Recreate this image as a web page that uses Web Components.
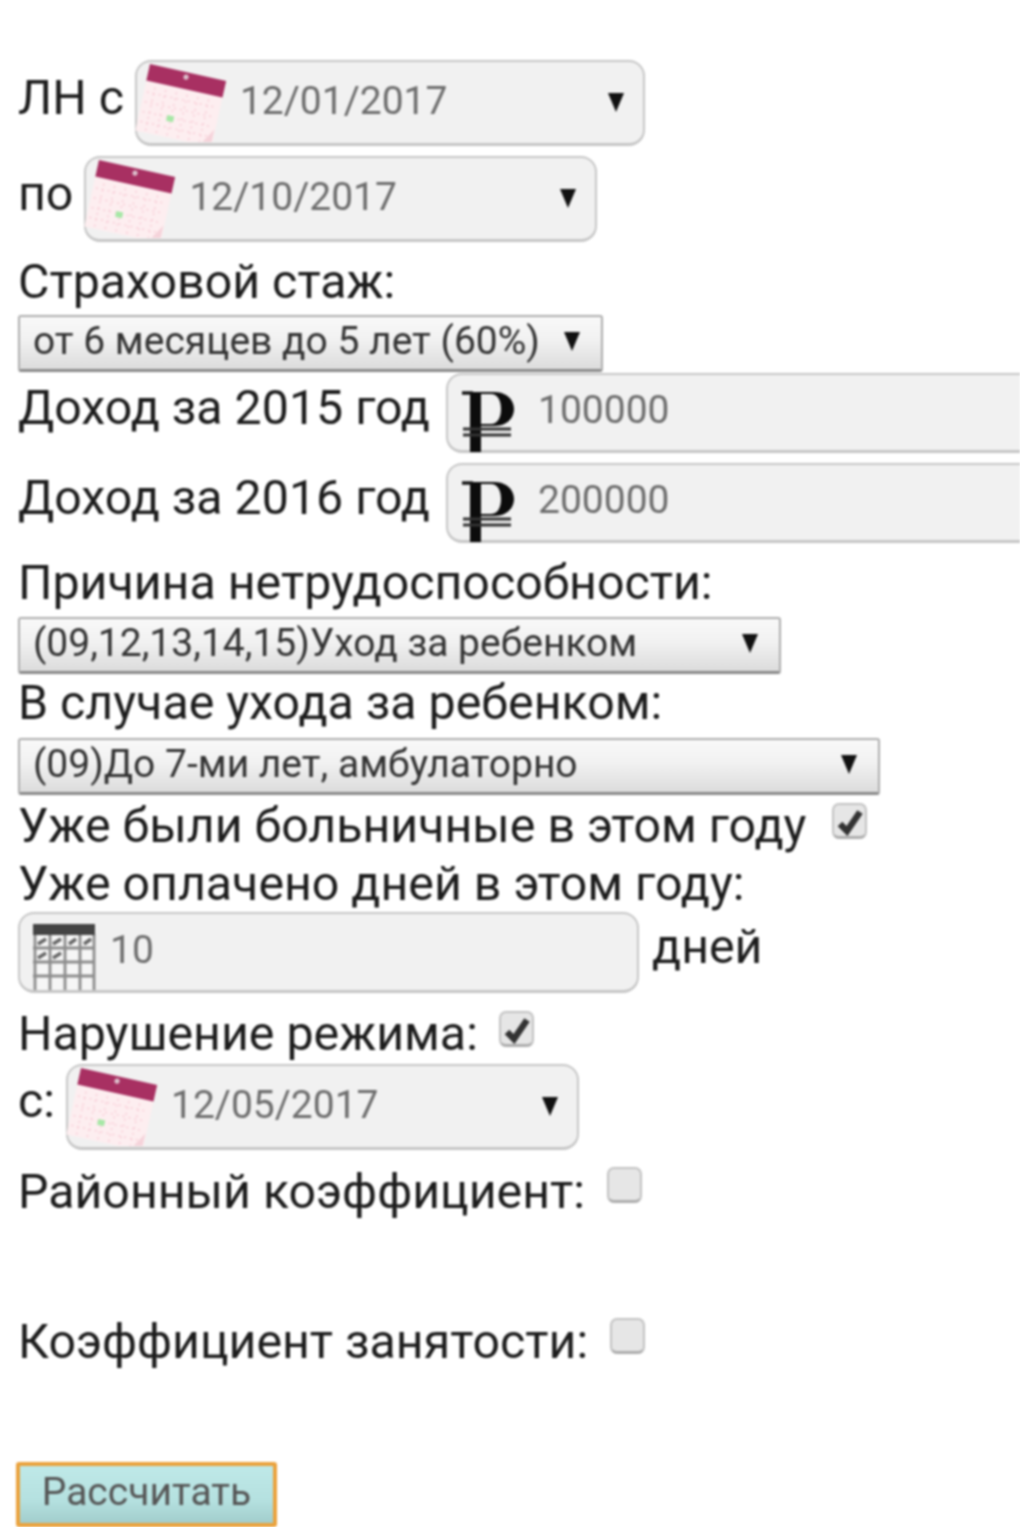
<!DOCTYPE html>
<html lang="ru">
<head>
<meta charset="utf-8">
<title>Калькулятор больничного</title>
<style>
html, body { margin: 0; padding: 0; background: #fff; overflow: hidden; }
body { font-family: Roboto, "Liberation Sans", sans-serif; color: #222; }
</style>
</head>
<body>
<calc-form>
  <form-row style="margin-top:60px">
    <form-text style="margin-bottom:7px">ЛН с</form-text>
    <date-field style="margin-left:11px;width:510px">12/01/2017</date-field>
  </form-row>
  <form-row style="margin-top:10px">
    <form-text style="margin-bottom:7px">по</form-text>
    <date-field style="margin-left:11px;width:513px">12/10/2017</date-field>
  </form-row>
  <form-row style="margin-top:18px;height:48px"><form-text>Страховой стаж:</form-text></form-row>
  <drop-select style="margin-top:7px;width:585px">от 6 месяцев до 5 лет (60%)</drop-select>
  <form-row style="margin-top:1px">
    <form-text style="margin-bottom:6px">Доход за 2015 год</form-text>
    <money-field style="margin-left:16px">100000</money-field>
  </form-row>
  <form-row style="margin-top:10px">
    <form-text style="margin-bottom:6px">Доход за 2016 год</form-text>
    <money-field style="margin-left:16px">200000</money-field>
  </form-row>
  <form-row style="margin-top:18px;height:48px"><form-text>Причина нетрудоспособности:</form-text></form-row>
  <drop-select style="margin-top:8px;width:763px">(09,12,13,14,15)Уход за ребенком</drop-select>
  <form-row style="margin-top:7px;height:48px"><form-text>В случае ухода за ребенком:</form-text></form-row>
  <drop-select style="margin-top:9px;width:862px">(09)До 7-ми лет, амбулаторно</drop-select>
  <form-row style="margin-top:9px;height:48px">
    <form-text>Уже были больничные в этом году</form-text>
    <check-box checked style="margin-left:26px;margin-bottom:14px"></check-box>
  </form-row>
  <form-row style="margin-top:10px;height:48px"><form-text>Уже оплачено дней в этом году:</form-text></form-row>
  <form-row style="margin-top:2px">
    <days-field>10</days-field>
    <form-text style="margin-left:13px;margin-bottom:8px">дней</form-text>
  </form-row>
  <form-row style="margin-top:19px;height:48px">
    <form-text>Нарушение режима:</form-text>
    <check-box checked style="margin-left:21px;margin-bottom:14px"></check-box>
  </form-row>
  <form-row style="margin-top:4px">
    <form-text style="margin-bottom:9px">с:</form-text>
    <date-field style="margin-left:11px;width:513px">12/05/2017</date-field>
  </form-row>
  <form-row style="margin-top:20px;height:48px">
    <form-text>Районный коэффициент:</form-text>
    <check-box style="margin-left:22px;margin-bottom:18px"></check-box>
  </form-row>
  <form-row style="margin-top:102px;height:48px">
    <form-text>Коэффициент занятости:</form-text>
    <check-box style="margin-left:22px;margin-bottom:16px"></check-box>
  </form-row>
  <calc-button style="margin-top:94px">Рассчитать</calc-button>
</calc-form>

<script>
// Small helper, every element below has a fixed template
function shadow(host, html) {
  host.attachShadow({ mode: 'open' }).innerHTML = html;
}

const arrow = '<svg class="arrow" width="18" height="20" viewBox="0 0 18 20"><path d="M1 1H17L9 20Z" fill="#111"/></svg>';

const pinkCalendar = `
<svg width="96" height="84" viewBox="0 0 96 84" aria-hidden="true">
  <g transform="translate(16 6) rotate(12.5)">
    <rect x="0" y="6" width="78" height="62" fill="#fdeef0"/>
    <g stroke="#f9d0d9" stroke-width="1.6" stroke-dasharray="2 4">
      <path d="M3 28H75M3 38H75M3 48H75M3 58H75"/>
      <path d="M10 22V66M21 22V66M32 22V66M43 22V66M54 22V66M65 22V66"/>
    </g>
    <rect x="0" y="0" width="78" height="17" fill="#a83062"/>
    <circle cx="38" cy="5" r="2.6" fill="#dcc0cc"/>
    <rect x="28" y="46" width="7" height="6" fill="#a6e8a6"/>
    <path d="M66 68L77 50V68Z" fill="#f5d3da"/>
  </g>
</svg>`;

const fieldStyle = `
  :host {
    display: flex;
    align-items: center;
    box-sizing: border-box;
    height: 86px;
    background: #f1f1f1;
    border: 2px solid #c6c6c6;
    border-bottom-width: 3px;
    border-radius: 16px;
    color: #6d6d6d;
    font: 39px Roboto, "Liberation Sans", sans-serif;
    flex: none;
  }
`;

class CalcForm extends HTMLElement {
  constructor() {
    super();
    shadow(this, `
      <style>
        :host { display: flex; flex-direction: column; align-items: flex-start; padding-left: 18px; width: 1020px; box-sizing: border-box; overflow: hidden; filter: blur(1px); }
      </style>
      <slot></slot>`);
  }
}

class FormRow extends HTMLElement {
  constructor() {
    super();
    shadow(this, `
      <style>
        :host { display: flex; align-items: center; flex: none; white-space: nowrap; }
      </style>
      <slot></slot>`);
  }
}

class FormText extends HTMLElement {
  constructor() {
    super();
    shadow(this, `
      <style>
        :host { display: block; flex: none; font-size: 48.3px; line-height: 48px; color: #1c1c1c; padding-bottom: 4px; }
      </style>
      <slot></slot>`);
  }
}

class DateField extends HTMLElement {
  constructor() {
    super();
    shadow(this, `
      <style>
        ${fieldStyle}
        svg { flex: none; margin: -5px 0 0 -3px; }
        .arrow { margin: -2px 18px 0 auto; }
        span { padding-bottom: 4px; margin-left: 10px; }
      </style>
      ${pinkCalendar}<span><slot></slot></span>${arrow}`);
  }
}

class MoneyField extends HTMLElement {
  constructor() {
    super();
    shadow(this, `
      <style>
        ${fieldStyle}
        :host { height: 80px; width: 640px; border-right: 0; border-radius: 16px 0 0 16px; }
        svg { flex: none; margin: 18px 0 0 13px; }
        span { padding-bottom: 6px; margin-left: 23px; }
      </style>
      <svg width="54" height="66" viewBox="0 0 54 66" aria-hidden="true">
        <path d="M9 3H33C46 3 53 11 53 20C53 29 46 37 33 37H20V63H9Z M20 5V35H30C37 35 40 28 40 20C40 12 37 5 30 5Z" fill="#0c0c0c" fill-rule="evenodd"/>
        <path d="M1 4H12" stroke="#111" stroke-width="3.4"/>
        <path d="M2 40H50M2 46H50" stroke="#333" stroke-width="3"/>
      </svg>
      <span><slot></slot></span>`);
  }
}

class DaysField extends HTMLElement {
  constructor() {
    super();
    shadow(this, `
      <style>
        ${fieldStyle}
        :host { height: 81px; width: 621px; }
        svg { flex: none; margin: 10px 0 0 12px; }
        span { padding-bottom: 4px; margin-left: 14px; }
      </style>
      <svg width="64" height="66" viewBox="0 0 64 66" aria-hidden="true">
        <rect x="1" y="0" width="62" height="66" fill="#f6f6f6"/>
        <path d="M3 10V66M18 10V66M33 10V66M48 10V66M62 10V66M1 24H63M1 38H63M1 52H63" stroke="#8d8d8d" stroke-width="2.8" fill="none"/>
        <rect x="1" y="0" width="62" height="11" fill="#444"/>
        <path d="M6 20L14 15M21 20L29 15M37 20L44 15M52 20L59 15M6 34L14 29M21 34L29 29" stroke="#666" stroke-width="3.4"/>
      </svg>
      <span><slot></slot></span>`);
  }
}

class DropSelect extends HTMLElement {
  constructor() {
    super();
    shadow(this, `
      <style>
        :host {
          display: flex;
          align-items: center;
          box-sizing: border-box;
          flex: none;
          height: 57px;
          padding-left: 13px;
          background: linear-gradient(#f9f9f9, #f1f1f1 45%, #dcdcdc);
          border: 2px solid #adadad;
          border-bottom: 3px solid #8a8a8a;
          border-radius: 3px;
          color: #333;
          font-size: 39px;
          white-space: nowrap;
        }
        span { padding-bottom: 4px; }
        .arrow { margin: -4px 20px 0 auto; flex: none; }
      </style>
      <span><slot></slot></span>${arrow}`);
  }
}

class CheckBox extends HTMLElement {
  constructor() {
    super();
    const mark = this.hasAttribute('checked')
      ? '<svg width="31" height="30" viewBox="2 2 31 30"><path d="M8 20L15 27L28 8" fill="none" stroke="#333" stroke-width="6.5"/></svg>'
      : '';
    shadow(this, `
      <style>
        :host {
          display: flex;
          align-items: center;
          justify-content: center;
          box-sizing: border-box;
          flex: none;
          width: 35px;
          height: 36px;
          margin-bottom: 8px;
          background: #e6e6e6;
          border: 2px solid #c2c2c2;
          border-bottom: 3px solid #adadad;
          border-radius: 7px;
        }
      </style>
      ${mark}`);
  }
}

class CalcButton extends HTMLElement {
  constructor() {
    super();
    shadow(this, `
      <style>
        :host {
          display: flex;
          align-items: center;
          justify-content: center;
          box-sizing: border-box;
          flex: none;
          width: 261px;
          height: 65px;
          margin-left: -2px;
          background: linear-gradient(#bfe9e8, #b5e1e0 60%, #a2cdcc);
          border: 4px solid #eba23c;
          border-radius: 3px;
          color: #555;
          font-size: 39px;
        }
        span { padding-bottom: 6px; }
      </style>
      <span><slot></slot></span>`);
  }
}

customElements.define('calc-form', CalcForm);
customElements.define('form-row', FormRow);
customElements.define('form-text', FormText);
customElements.define('date-field', DateField);
customElements.define('money-field', MoneyField);
customElements.define('days-field', DaysField);
customElements.define('drop-select', DropSelect);
customElements.define('check-box', CheckBox);
customElements.define('calc-button', CalcButton);
</script>
</body>
</html>
